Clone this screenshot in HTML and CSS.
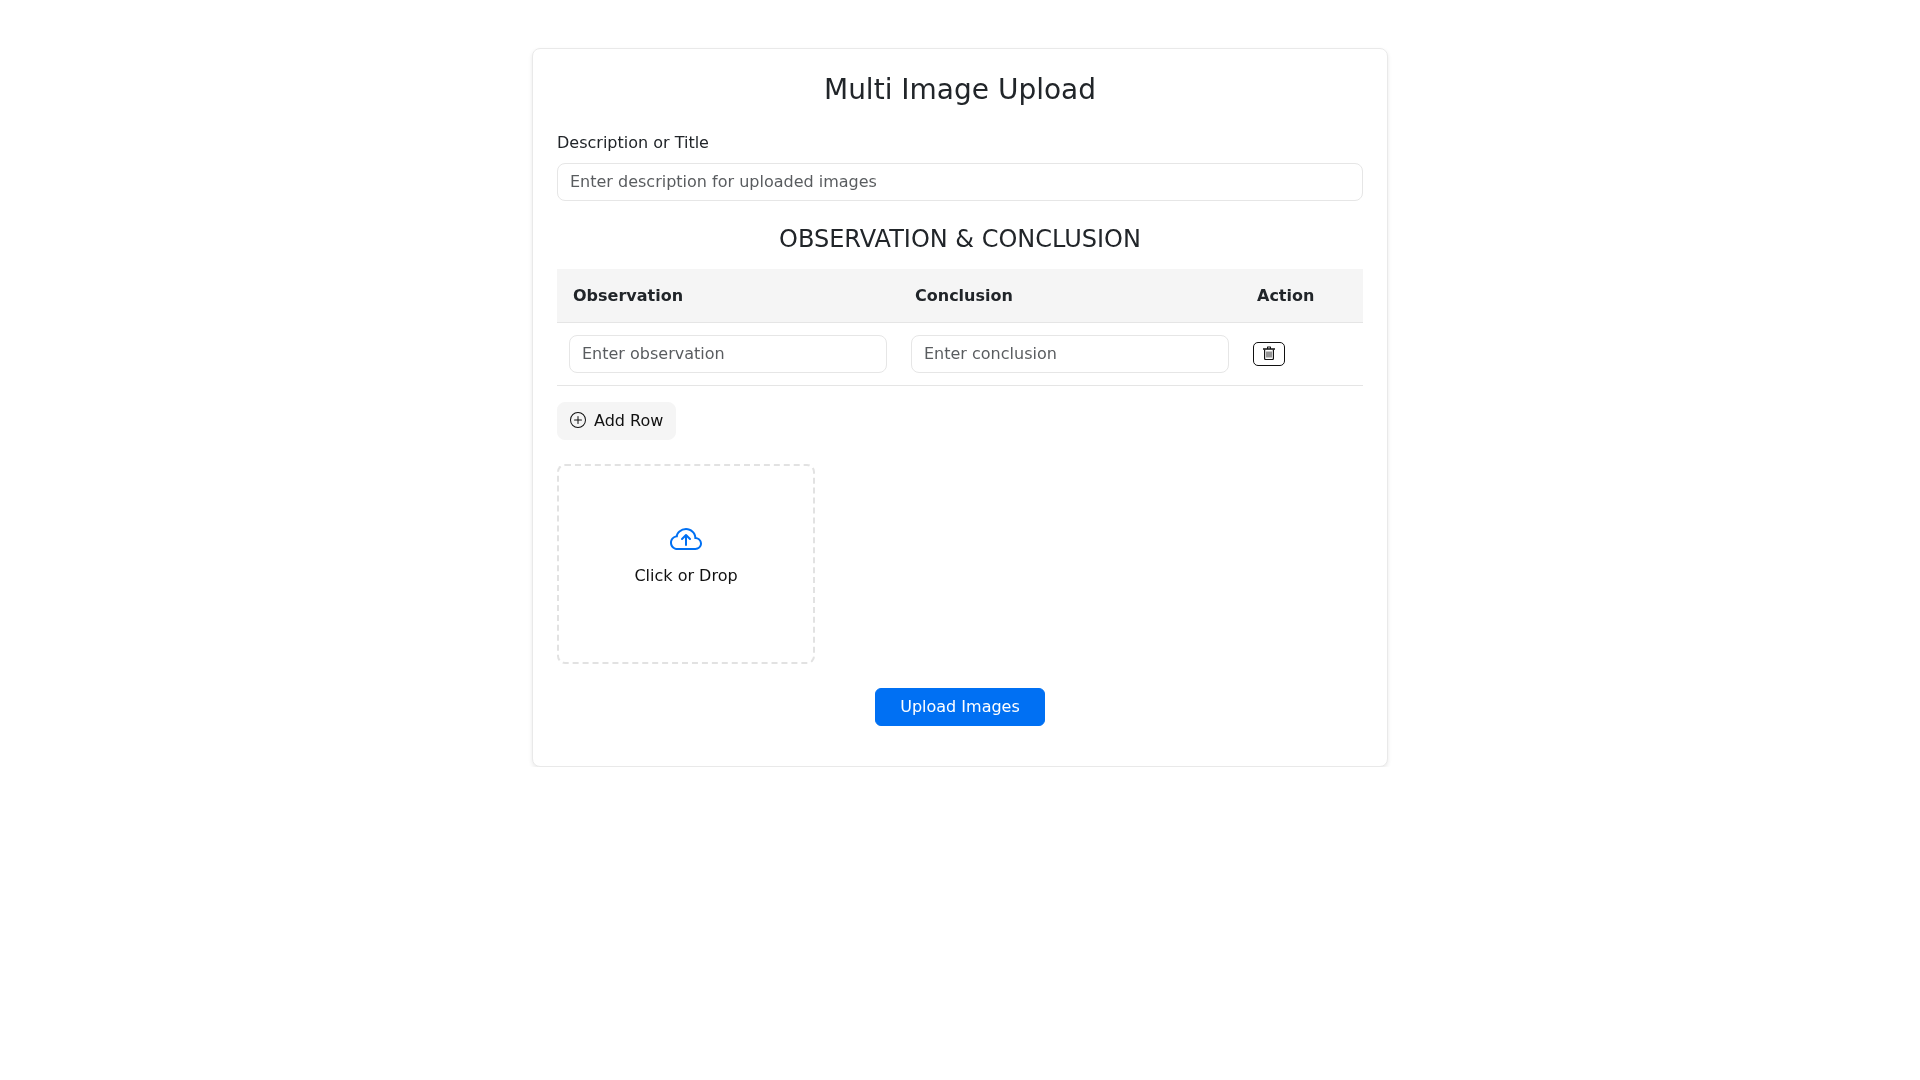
FILE: index.html
```html
<!DOCTYPE html>
<html lang="en">
<head>
    <meta charset="UTF-8">
    <meta name="viewport" content="width=device-width, initial-scale=1.0">
    <title>Multi Image Upload</title>
    <link rel="stylesheet" href="styles.css">
</head>
<body>

    <div class="card">
        <h3 class="title">Multi Image Upload</h3>

        <div class="field">
            <label class="field-label" for="description">Description or Title</label>
            <input type="text" id="description" class="text-input" placeholder="Enter description for uploaded images">
        </div>

        <h4 class="subtitle">OBSERVATION &amp; CONCLUSION</h4>

        <table class="obs-table">
            <thead>
                <tr>
                    <th class="col-text">Observation</th>
                    <th class="col-text">Conclusion</th>
                    <th class="col-action">Action</th>
                </tr>
            </thead>
            <tbody>
                <tr>
                    <td><input type="text" class="text-input" placeholder="Enter observation"></td>
                    <td><input type="text" class="text-input" placeholder="Enter conclusion"></td>
                    <td>
                        <button type="button" class="delete-btn" aria-label="Delete row">
                            <svg class="delete-icon" viewBox="0 0 12 14">
                                <path class="delete-lid" d="M0 2.25h12v1.5H0zM4 2.5V1a.5.5 0 0 1 .5-.5h3A.5.5 0 0 1 8 1v1.5h-1V1.5H5v1z"/>
                                <path class="delete-body" d="M1.6 3.5v9A1 1 0 0 0 2.6 13.5h6.8a1 1 0 0 0 1-1v-9"/>
                                <path class="delete-bars" d="M4 5.5v6M6 5.5v6M8 5.5v6"/>
                            </svg>
                        </button>
                    </td>
                </tr>
            </tbody>
        </table>

        <button type="button" class="add-btn">
            <svg class="add-icon" viewBox="0 0 16 16" fill="currentColor">
                <path d="M8 15A7 7 0 1 1 8 1a7 7 0 0 1 0 14zm0 1A8 8 0 1 0 8 0a8 8 0 0 0 0 16z"/>
                <path d="M8 4a.5.5 0 0 1 .5.5v3h3a.5.5 0 0 1 0 1h-3v3a.5.5 0 0 1-1 0v-3h-3a.5.5 0 0 1 0-1h3v-3A.5.5 0 0 1 8 4z"/>
            </svg>
            Add Row
        </button>

        <div class="upload-grid">
            <div class="drop-zone">
                <svg class="cloud-icon" viewBox="0 0 16 16" fill="currentColor">
                    <path fill-rule="evenodd" d="M7.646 5.146a.5.5 0 0 1 .708 0l2 2a.5.5 0 0 1-.708.708L8.5 6.707V10.5a.5.5 0 0 1-1 0V6.707L6.354 7.854a.5.5 0 1 1-.708-.708l2-2z"/>
                    <path d="M4.406 3.342A5.53 5.53 0 0 1 8 2c2.69 0 4.923 2 5.166 4.579C14.758 6.804 16 8.137 16 9.773 16 11.569 14.502 13 12.687 13H3.781C1.708 13 0 11.366 0 9.318c0-1.763 1.266-3.223 2.942-3.593.143-.863.698-1.723 1.464-2.383zm.653.757c-.757.653-1.153 1.44-1.153 2.056v.448l-.445.049C2.064 6.805 1 7.952 1 9.318 1 10.785 2.23 12 3.781 12h8.906C13.98 12 15 10.988 15 9.773c0-1.216-1.02-2.228-2.313-2.228h-.5v-.5C12.188 4.825 10.328 3 8 3a4.53 4.53 0 0 0-2.941 1.1z"/>
                </svg>
                <span class="drop-text">Click or Drop</span>
            </div>
        </div>

        <div class="submit-row">
            <button type="button" class="submit-btn">Upload Images</button>
        </div>
    </div>

</body>
</html>
```

FILE: styles.css
```css
* {
    box-sizing: border-box;
}
body {
    font-family: 'DejaVu Sans', sans-serif;
    font-size: 16px;
    line-height: 1.5;
    background: #fff;
    color: #212529;
    margin: 0;
}
.card {
    width: 856px;
    margin: 48px auto 0;
    padding: 24px;
    background: #fff;
    border: 1px solid #e9e9e9;
    border-radius: 8px;
    box-shadow: 0 2px 4px rgba(0, 0, 0, 0.09);
    will-change: transform;
}
.title {
    margin: 0 0 24px;
    font-size: 28px;
    font-weight: 400;
    line-height: 1.2;
    text-align: center;
}
.field {
    margin-bottom: 24px;
}
.field-label {
    display: block;
    margin-bottom: 8px;
}
.text-input {
    display: block;
    width: 100%;
    height: 38px;
    padding: 6px 12px;
    font-family: inherit;
    font-size: 16px;
    color: #212529;
    background: #fff;
    border: 1px solid #e6e6e6;
    border-radius: 8px;
}
.text-input::placeholder {
    color: rgba(33, 37, 41, 0.75);
}
.subtitle {
    margin: 0 0 16px;
    font-size: 24px;
    font-weight: 400;
    line-height: 1.2;
    text-align: center;
}
.obs-table {
    width: 100%;
    margin-bottom: 16px;
    border-collapse: collapse;
    table-layout: fixed;
}
.col-text {
    width: 342px;
}
.obs-table th {
    height: 53px;
    padding: 0 16px;
    text-align: left;
    font-weight: 700;
    background: #f5f5f5;
    border-bottom: 1px solid #e5e5e5;
}
.obs-table td {
    padding: 12px;
    vertical-align: middle;
    border-bottom: 1px solid #e5e5e5;
}
.delete-btn {
    display: flex;
    align-items: center;
    justify-content: center;
    width: 32px;
    height: 24px;
    padding: 0;
    color: #111;
    background: #fff;
    border: 1px solid #111;
    border-radius: 5px;
}
.delete-icon {
    display: block;
    width: 12px;
    height: 14px;
    margin-bottom: 2px;
}
.delete-lid {
    fill: currentColor;
}
.delete-body,
.delete-bars {
    fill: none;
    stroke: currentColor;
}
.delete-body {
    stroke-width: 1.2;
}
.delete-bars {
    stroke-width: 0.9;
}
.add-btn {
    display: flex;
    align-items: center;
    gap: 8px;
    height: 38px;
    padding: 6px 12px;
    font-family: inherit;
    font-size: 16px;
    color: #111;
    background: #f5f5f5;
    border: 1px solid #f5f5f5;
    border-radius: 8px;
}
.add-icon {
    width: 16px;
    height: 16px;
    margin-bottom: 2px;
}
.upload-grid {
    display: grid;
    grid-template-columns: repeat(3, 1fr);
    gap: 16px;
    margin: 24px 0;
}
.drop-zone {
    display: flex;
    flex-direction: column;
    align-items: center;
    justify-content: center;
    height: 200px;
    padding-bottom: 16px;
    color: #111;
    border: 2px dashed #e2e2e2;
    border-radius: 8px;
}
.cloud-icon {
    width: 32px;
    height: 32px;
    margin-bottom: 8px;
    color: #0070f3;
}
.submit-row {
    display: flex;
    justify-content: center;
    margin-bottom: 16px;
}
.submit-btn {
    height: 38px;
    padding: 6px 24px;
    font-family: inherit;
    font-size: 16px;
    color: #fff;
    background: #0070f3;
    border: 1px solid #0070f3;
    border-radius: 6px;
}
```
